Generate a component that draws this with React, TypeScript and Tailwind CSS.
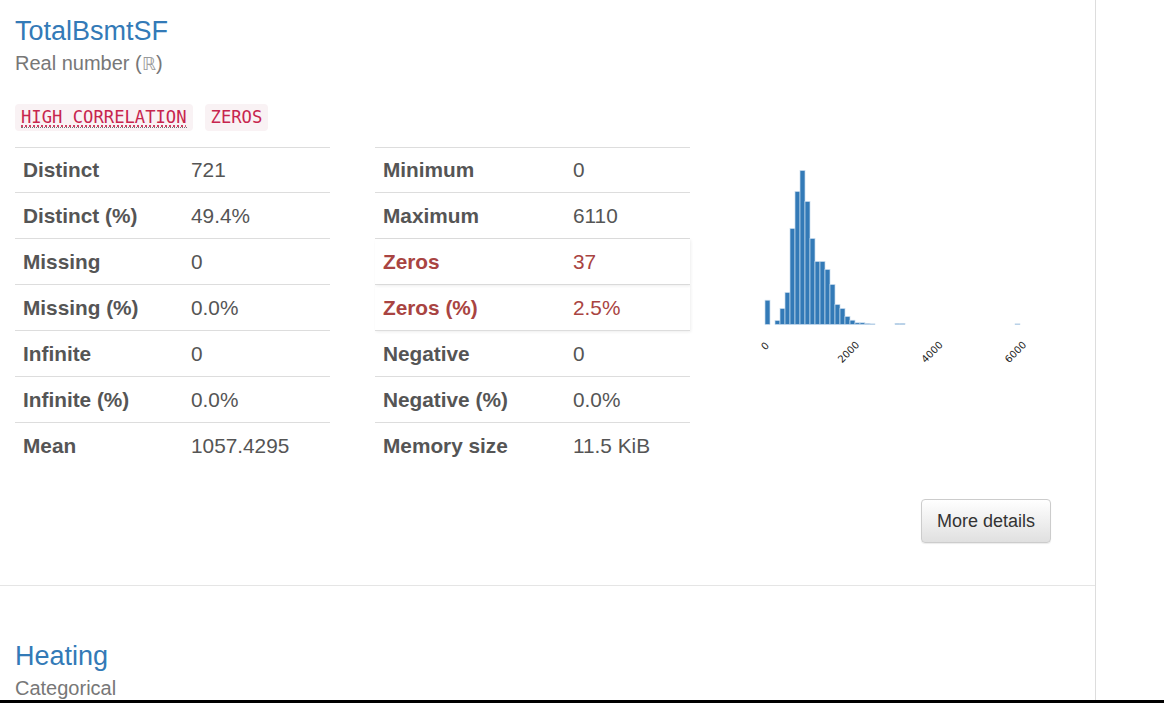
import React from "react";

const heights: number[] = [
  24.3, 0, 4, 16, 32, 96, 133, 154, 123, 86, 63, 63, 55, 40, 20, 16, 8, 4.3, 1.7, 1.7, 1, 0.6, 0, 0, 0, 0, 1, 1, 0, 0,
  0, 0, 0, 0, 0, 0, 0, 0, 0, 0, 0, 0, 0, 0, 0, 0, 0, 0, 0, 0, 0.6,
];

type Row = { label: string; value: string; warn?: boolean };

const left: Row[] = [
  { label: "Distinct", value: "721" },
  { label: "Distinct (%)", value: "49.4%" },
  { label: "Missing", value: "0" },
  { label: "Missing (%)", value: "0.0%" },
  { label: "Infinite", value: "0" },
  { label: "Infinite (%)", value: "0.0%" },
  { label: "Mean", value: "1057.4295" },
];

const right: Row[] = [
  { label: "Minimum", value: "0" },
  { label: "Maximum", value: "6110" },
  { label: "Zeros", value: "37", warn: true },
  { label: "Zeros (%)", value: "2.5%", warn: true },
  { label: "Negative", value: "0" },
  { label: "Negative (%)", value: "0.0%" },
  { label: "Memory size", value: "11.5 KiB" },
];

function StatTable({ rows, labelW }: { rows: Row[]; labelW: string }) {
  return (
    <div className="w-[315px] flex flex-col">
      {rows.map((r, i) => (
        <div
          key={r.label}
          className={
            "flex items-center h-[46px] " +
            (i === 0 ? "border-t border-[#dddddd] " : "") +
            (i < rows.length - 1 ? "border-b border-[#dddddd] " : "") +
            (r.warn ? "text-[#a94442] shadow-[1px_1px_3px_rgba(0,0,0,0.07)] " : "text-[#555555] ")
          }
        >
          <div className={labelW + " pl-2 font-bold"}>{r.label}</div>
          <div className="pl-2">{r.value}</div>
        </div>
      ))}
    </div>
  );
}

function Histogram() {
  const base = 177.5;
  const ticks = [
    { t: "0", x: 32.5, y: 201.5 },
    { t: "2000", x: 116, y: 207.5 },
    { t: "4000", x: 199.5, y: 207.5 },
    { t: "6000", x: 283, y: 207.5 },
  ];
  return (
    <svg width="330" height="230" viewBox="0 0 330 230" className="ml-[45px] shrink-0">
      {heights.map((h, i) =>
        h > 0 ? (
          <rect
            key={i}
            x={30 + i * 5}
            y={base - h}
            width={5}
            height={h}
            fill="#337ab7"
            stroke="#c9dcee"
            strokeWidth={0.7}
          />
        ) : null
      )}
      {ticks.map((tk) => (
        <text
          key={tk.t}
          x={tk.x}
          y={tk.y}
          fontSize={10}
          fill="#222222"
          textAnchor="middle"
          fontFamily="'DejaVu Sans', sans-serif"
          transform={`rotate(-45 ${tk.x} ${tk.y})`}
        >
          {tk.t}
        </text>
      ))}
    </svg>
  );
}

export default function App() {
  return (
    <div
      className="w-[1164px] h-[703px] overflow-hidden flex flex-col bg-white"
      style={{ fontFamily: "'Liberation Sans', Arial, sans-serif" }}
    >
      <div className="flex flex-1 min-h-0">
        <div className="w-[1096px] border-r border-[#dddddd] flex flex-col">
          {/* Section 1 */}
          <div className="pl-[15px] pt-[16px] border-b border-[#e5e5e5] pb-[42px]">
            <div className="text-[27px] leading-[30px] text-[#337ab7]">TotalBsmtSF</div>
            <div className="mt-[5px] text-[20px] leading-[24px] text-[#777777]">
              Real number (<span style={{ fontFamily: "'DejaVu Sans', sans-serif" }} className="text-[#9a9a9a] text-[18px]">ℝ</span>)
            </div>
            <div className="mt-[28px] flex gap-[12px]">
              <span
                className="h-[27px] px-[6px] rounded-[4px] bg-[#f9f2f4] text-[#c7254e] text-[17.2px] leading-[27px]"
                style={{ fontFamily: "'DejaVu Sans Mono', 'Liberation Mono', monospace" }}
              >
                <abbr className="no-underline border-b border-dotted border-[#777777]">
                  <span className="underline decoration-dotted decoration-[#c7254e] underline-offset-[3px]">HIGH CORRELATION</span>
                </abbr>
              </span>
              <span
                className="h-[27px] px-[6px] rounded-[4px] bg-[#f9f2f4] text-[#c7254e] text-[17.2px] leading-[27px]"
                style={{ fontFamily: "'DejaVu Sans Mono', 'Liberation Mono', monospace" }}
              >
                ZEROS
              </span>
            </div>
            <div className="mt-[16px] flex text-[20.8px]">
              <StatTable rows={left} labelW="w-[168px]" />
              <div className="ml-[45px]">
                <StatTable rows={right} labelW="w-[190px]" />
              </div>
              <Histogram />
            </div>
            <div className="mt-[30px] flex justify-end pr-[44px]">
              <button className="w-[130px] h-[44px] rounded-[4px] border border-[#cccccc] bg-gradient-to-b from-white to-[#e0e0e0] text-[#333333] text-[18px] shadow-[0_1px_1px_rgba(0,0,0,0.08)]">
                More details
              </button>
            </div>
          </div>
          {/* Section 2 */}
          <div className="pl-[15px] pt-[55px]">
            <div className="text-[27px] leading-[30px] text-[#337ab7]">Heating</div>
            <div className="mt-[5px] text-[20px] leading-[24px] text-[#777777]">Categorical</div>
          </div>
        </div>
        <div className="flex-1" />
      </div>
      <div className="h-[3px] bg-black shrink-0" />
    </div>
  );
}
